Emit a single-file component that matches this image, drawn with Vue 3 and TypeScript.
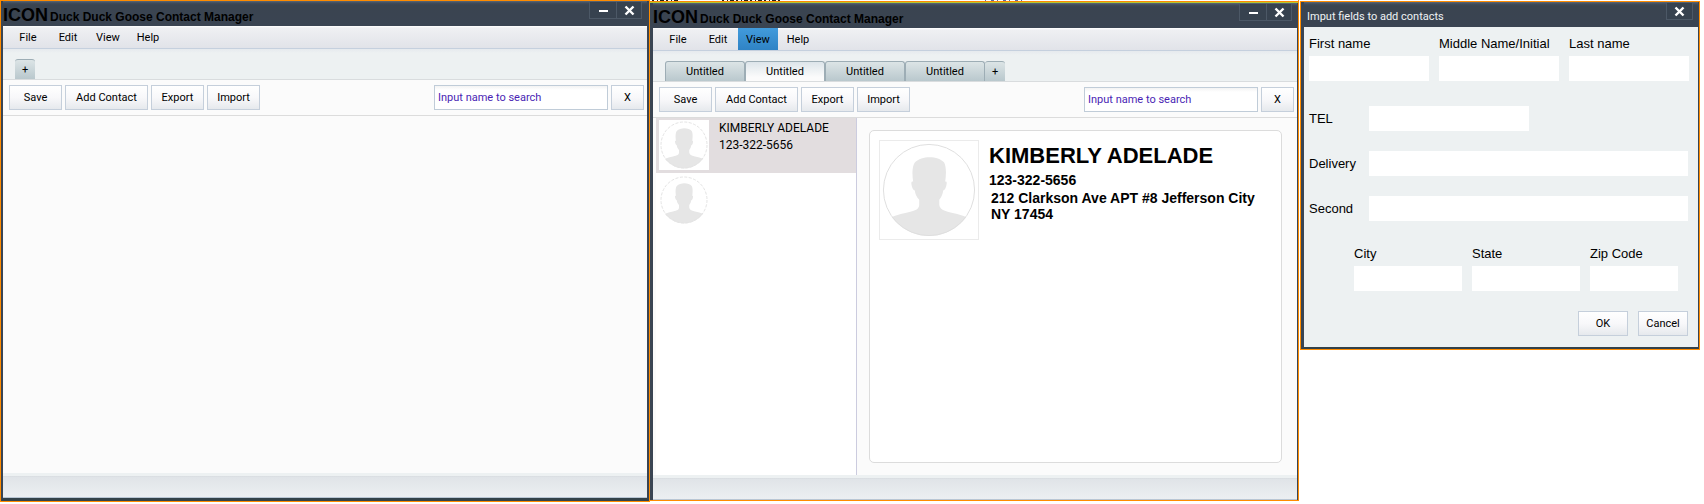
<script setup lang="ts">
import { ref } from 'vue'

interface Contact {
  name: string
  phone: string
}

interface ManagerWindow {
  id: string
  tabs: string[]
  activeTab: number
  activeMenu: string
  contacts: Contact[]
  address: string
}

const menus = ['File', 'Edit', 'View', 'Help']

const managers = ref<ManagerWindow[]>([
  { id: 'empty', tabs: [], activeTab: -1, activeMenu: '', contacts: [], address: '' },
  {
    id: 'filled',
    tabs: ['Untitled', 'Untitled', 'Untitled', 'Untitled'],
    activeTab: 1,
    activeMenu: 'View',
    contacts: [
      { name: 'KIMBERLY ADELADE', phone: '123-322-5656' },
      { name: '', phone: '' },
    ],
    address: '212 Clarkson Ave APT #8 Jefferson City NY 17454',
  },
])

const searches = ref<Record<string, string>>({
  empty: 'Input name to search',
  filled: 'Input name to search',
})

function addTab(win: ManagerWindow) {
  win.tabs.push('Untitled')
}
</script>

<template>
  <main class="desktop">
    <svg width="0" height="0" class="defs" aria-hidden="true">
      <defs>
        <clipPath id="disc"><circle cx="50" cy="50" r="47" /></clipPath>
        <symbol id="person" viewBox="0 0 100 100">
          <g clip-path="url(#disc)">
            <path
              fill="#e6e6e6"
              d="M0 100V84C9 78 18 75 28 73C37 71 40 69 40 65V60C37 57 36 54 35.500 50.500C33.500 50 32.500 47 32 43.500C31.800 41.500 32.800 41 33.800 41.500C32.500 32 33 26 35.500 22C39 18 45 16.500 50.500 16.500C57 16.500 62 18 65.500 22C67.500 26 67.800 33 66.500 41.500C67.800 41 68.300 42 68 44C67.500 47.500 66.500 50 64.500 50.500C64 54 63 57 60.500 60V65C61 69 64 71 72 73C82 75 91 78 100 84V100Z"
            />
          </g>
        </symbol>
      </defs>
    </svg>

    <section v-for="win in managers" :key="win.id" class="window" :class="win.id">
      <div v-if="win.id === 'filled'" class="sliver" aria-hidden="true">
        <svg width="480" height="1" viewBox="0 0 480 1">
          <path d="M2 .5H30M72 .5H130" stroke="#222" stroke-dasharray="2 3 1 2 4 2" />
          <path d="M335 .5H372" stroke="#5a6aa0" stroke-dasharray="1 5 3 3" />
        </svg>
      </div>
      <div class="frame">
        <header class="titlebar">
          <strong class="brand">ICON</strong>
          <h1 class="title">Duck Duck Goose Contact Manager</h1>
          <div class="caption">
            <button type="button" class="minimize" aria-label="Minimize">
              <svg width="11" height="11" viewBox="0 0 11 11"><path d="M1 6H10" stroke="#fff" stroke-width="2" /></svg>
            </button>
            <button type="button" aria-label="Close">
              <svg width="11" height="11" viewBox="0 0 11 11"><path d="M1.500 1.500L9.500 9.500M9.500 1.500L1.500 9.500" stroke="#fff" stroke-width="2.400" /></svg>
            </button>
          </div>
        </header>

        <nav class="menubar">
          <button
            v-for="menu in menus"
            :key="menu"
            type="button"
            :class="{ active: menu === win.activeMenu }"
            @click="win.activeMenu = menu"
          >{{ menu }}</button>
        </nav>

        <div class="tabs">
          <button
            v-for="(tab, i) in win.tabs"
            :key="i"
            type="button"
            class="tab"
            :class="{ active: i === win.activeTab }"
            @click="win.activeTab = i"
          >{{ tab }}</button>
          <button type="button" class="tab plus" @click="addTab(win)">+</button>
        </div>

        <div class="toolbar">
          <button type="button" class="btn">Save</button>
          <button type="button" class="btn wide">Add Contact</button>
          <button type="button" class="btn">Export</button>
          <button type="button" class="btn">Import</button>
          <input v-model="searches[win.id]" type="text" class="search" aria-label="Search contacts" />
          <button type="button" class="btn clear" @click="searches[win.id] = ''">X</button>
        </div>

        <div class="content">
          <template v-if="win.contacts.length">
            <ul class="list">
              <li v-for="(c, i) in win.contacts" :key="i" :class="{ selected: i === 0 }">
                <svg class="avatar" viewBox="0 0 100 100" aria-hidden="true">
                  <use href="#person" />
                  <circle cx="50" cy="50" r="46" fill="none" stroke="#e4e4e4" stroke-width="2" stroke-dasharray="6 3" />
                </svg>
                <div class="lines">
                  <div>{{ c.name }}</div>
                  <div>{{ c.phone }}</div>
                </div>
              </li>
            </ul>
            <article class="card">
              <svg class="portrait" viewBox="0 0 100 100" aria-hidden="true">
                <use href="#person" />
                <circle cx="50" cy="50" r="46.500" fill="none" stroke="#dedede" />
              </svg>
              <div class="info">
                <h2>{{ win.contacts[0].name }}</h2>
                <p class="phone">{{ win.contacts[0].phone }}</p>
                <p class="address">{{ win.address }}</p>
              </div>
            </article>
          </template>
        </div>
        <footer class="status"></footer>
      </div>
    </section>

    <form class="window dialog" @submit.prevent>
      <div class="frame">
        <header class="titlebar">
          <h1 class="title">Imput fields to add contacts</h1>
          <div class="caption">
            <button type="button" aria-label="Close">
              <svg width="11" height="11" viewBox="0 0 11 11"><path d="M1.500 1.500L9.500 9.500M9.500 1.500L1.500 9.500" stroke="#fff" stroke-width="2.400" /></svg>
            </button>
          </div>
        </header>
        <div class="form">
          <div class="names">
            <label>First name<input type="text" /></label>
            <label>Middle Name/Initial<input type="text" /></label>
            <label>Last name<input type="text" /></label>
          </div>
          <div class="rows">
            <label class="tel">TEL<input type="tel" /></label>
            <label>Delivery<input type="text" /></label>
            <label>Second<input type="text" /></label>
          </div>
          <div class="places">
            <label>City<input type="text" /></label>
            <label>State<input type="text" /></label>
            <label>Zip Code<input type="text" /></label>
          </div>
          <div class="actions">
            <button type="submit" class="btn">OK</button>
            <button type="button" class="btn">Cancel</button>
          </div>
        </div>
      </div>
    </form>
  </main>
</template>

<style>
body {
  margin: 0;
  background: #fff;
}
</style>

<style scoped>
* {
  box-sizing: border-box;
}

.desktop {
  display: grid;
  grid-template-columns: 650fr 649fr 401fr;
  align-items: start;
  padding-right: 4px;
  color: #000;
  font: 11px/16px Roboto, "Liberation Sans", Arial, sans-serif;
}

.defs {
  position: absolute;
}

button,
input {
  margin: 0;
  padding: 0;
  border: 0;
  border-radius: 0;
  color: inherit;
  font: inherit;
}

.window {
  min-width: 0;
  border: 1px solid #ff8c00;
}

.frame {
  border: solid #3a4553;
  border-width: 0 2px 3px;
  border-bottom-color: #33424a;
}

.filled {
  border-width: 0 1px 1px 0;
}

.filled .frame {
  border-width: 0 1px 0 3px;
}

.sliver {
  height: 3px;
  border-bottom: 1px solid #b4c832;
  background: linear-gradient(#fff 1px, #ff8c00 1px, #ff8c00 2px, #fff 2px);
}

.sliver svg {
  display: block;
}

.titlebar {
  display: flex;
  align-items: flex-end;
  height: 25px;
  background: linear-gradient(#5c6876, #3f4b5a 2px, #3a4450 4px, #3a4452);
}

.brand {
  font: bold 18px/22px "Liberation Sans", Arial, sans-serif;
}

.title {
  margin: 0;
  padding-left: 2px;
  font: bold 12px/18px "Liberation Sans", Arial, sans-serif;
  white-space: nowrap;
}

.caption {
  display: flex;
  align-self: flex-start;
  margin: 1px 5px 0 auto;
  border: 1px solid #4c5866;
  border-top: 0;
}

.caption button {
  display: flex;
  align-items: center;
  justify-content: center;
  width: 25px;
  height: 16px;
  background: #37424f;
}

.caption .minimize {
  width: 26px;
}

.caption button + button {
  border-left: 1px solid #4c5866;
}

.menubar {
  display: flex;
  height: 23px;
  padding-left: 5px;
  border-bottom: 1px solid #c5d0de;
  background: linear-gradient(#fff, #eff0f3 2px, #e1e3e9);
}

.menubar button {
  width: 40px;
  padding-top: 2px;
  background: none;
  text-align: center;
}

.menubar .active {
  background: linear-gradient(#429bdc, #2f83c5);
}

.tabs {
  display: flex;
  align-items: flex-end;
  height: 31px;
  padding-left: 12px;
  border-bottom: 1px solid #d9dcde;
  background: linear-gradient(#e6eaee, #edf1f2 4px);
}

.tab {
  width: 80px;
  height: 20px;
  border: 1px solid #9dadb5;
  border-bottom: 0;
  border-radius: 3px 3px 0 0;
  background: linear-gradient(#dce4e6, #b9c8cd);
}

.tab.active {
  background: linear-gradient(#dde5ea, #fbfbfb 80%);
}

.tab.plus {
  width: 20px;
  border-right: 0;
  border-left: 0;
}

.toolbar {
  display: flex;
  gap: 3px;
  padding: 5px 3px 5px 6px;
  border-bottom: 1px solid #dcdcdc;
  background: #fbfbfb;
}

.btn {
  width: 53px;
  height: 25px;
  border: 1px solid #c5cfdb;
  background: linear-gradient(#fff, #f8f8fa 50%, #e6e9ed);
}

.btn.wide {
  width: 83px;
}

.btn.clear {
  width: 33px;
}

.search {
  width: 174px;
  height: 25px;
  margin-left: auto;
  padding: 0 3px;
  border: 1px solid #c0ccd8;
  background: linear-gradient(#f3f3f3, #fff 4px);
  color: #4a1fb4;
}

.content {
  display: flex;
  min-height: 357px;
  background: #fbfbfb;
}

.list {
  width: 204px;
  margin: 0;
  padding: 0;
  border-right: 1px solid #ccccdf;
  border-left: 3px solid #fbfbfb;
  background: #fff;
  list-style: none;
}

.list li {
  display: flex;
  gap: 10px;
  height: 55px;
  padding: 2px 3px;
}

.list .selected {
  background: #e2dddf;
}

.avatar {
  width: 50px;
  height: 50px;
  background: #fff;
}

.lines {
  font-size: 12px;
  line-height: 17px;
}

.card {
  display: flex;
  flex: 1;
  gap: 10px;
  margin: 12px 15px 12px 12px;
  padding: 9px;
  border: 1px solid #dcdcdc;
  border-radius: 5px;
  background: #fff;
  font: bold 14px/16px "Liberation Sans", Arial, sans-serif;
}

.portrait {
  flex: none;
  width: 100px;
  height: 100px;
  border: 1px solid #ebebeb;
}

.info h2 {
  margin: 3px 0 0;
  font-size: 22px;
  line-height: 25px;
}

.info p {
  margin: 0;
}

.info .phone {
  padding: 4px 0 2px;
}

.info .address {
  padding-left: 2px;
}

.status {
  height: 25px;
  border-top: 3px solid #edf1f2;
  border-bottom: 1px solid #b9c6d4;
  background: linear-gradient(#d5d9dd, #e0e4e8 1px, #eceff2);
}

.dialog {
  margin: 1px 0 0 1px;
}

.dialog .frame {
  border-width: 0 1px 2px 3px;
}

.dialog .title {
  padding-left: 3px;
  color: #eef2f4;
  font: 11px/20px Roboto, "Liberation Sans", Arial, sans-serif;
}

.form {
  padding: 9px 9px 11px 5px;
  background: #edf1f2;
  font: 13px/16px "Liberation Sans", Arial, sans-serif;
}

.form input {
  display: block;
  width: 100%;
  height: 25px;
  background: #fff;
}

.names {
  display: grid;
  grid-template-columns: repeat(3, 1fr);
  gap: 10px;
}

.names input,
.places input {
  margin-top: 4px;
}

.rows {
  display: grid;
  gap: 20px;
  padding: 25px 1px 25px 0;
}

.rows label {
  display: grid;
  grid-template-columns: 60px 1fr;
  align-items: center;
}

.rows .tel {
  grid-template-columns: 60px 160px;
}

.places {
  display: grid;
  grid-template-columns: 108fr 108fr 88fr;
  gap: 10px;
  padding: 0 11px 20px 45px;
}

.actions {
  display: flex;
  justify-content: flex-end;
  gap: 10px;
  padding-right: 1px;
}

.actions .btn {
  width: 50px;
  font: 11px/16px Roboto, "Liberation Sans", Arial, sans-serif;
}
</style>
